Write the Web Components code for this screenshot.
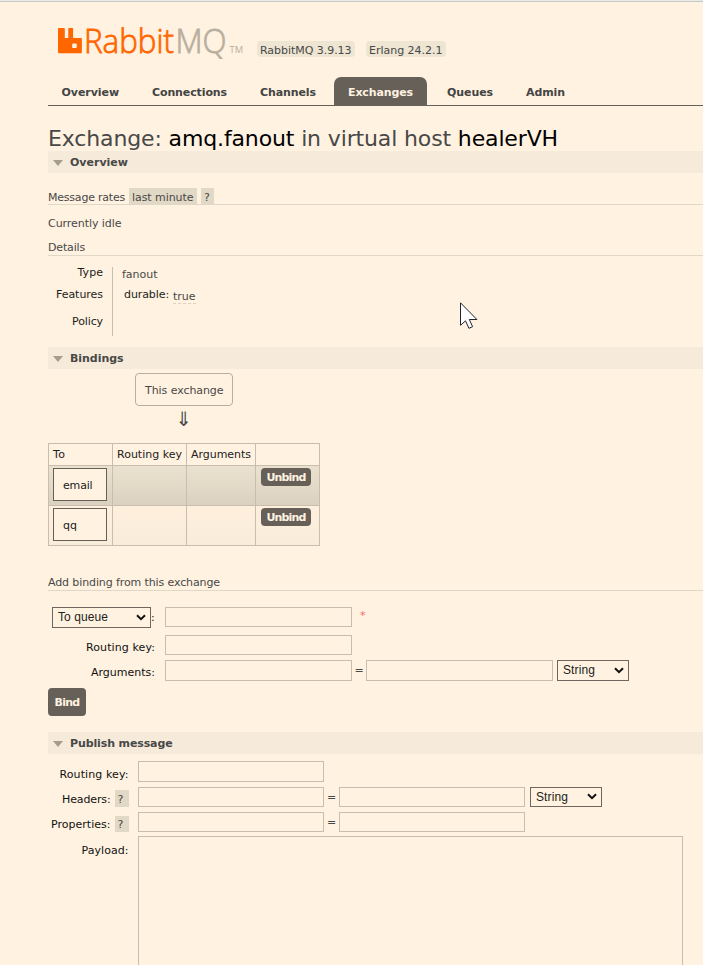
<!DOCTYPE html>
<html lang="en">
<head>
<meta charset="utf-8">
<title>RabbitMQ Management</title>
<style>
html,body{margin:0;padding:0}
body{width:703px;height:965px;overflow:hidden;background:#fff2e0;color:#484848;font:11px/13px "DejaVu Sans",Verdana,sans-serif}
</style>
</head>
<body>
<management-page></management-page>
<script>
function element(name, markup) {
  customElements.define(name, class extends HTMLElement {
    constructor() {
      super();
      const t = document.createElement('template');
      t.innerHTML = markup;
      this.attachShadow({mode: 'open'}).appendChild(t.content.cloneNode(true));
    }
    connectedCallback() {
      for (const p of ['w', 'h']) if (this.hasAttribute(p)) this.style.setProperty('--' + p, this.getAttribute(p) + 'px');
    }
  });
}

element('brand-logo', `<style>:host{display:block;width:190px;height:50px;margin-top:-13px}svg{display:block}text{font-family:"Open Sans","Noto Sans",sans-serif}</style>
<svg width="190" height="54" viewBox="0 -13 190 54">
<path fill="#f60" d="M1 3h5q.8 0 .8.8v9.200h3.500V3.800q0-.8.8-.8h3.200q.8 0 .8.8v9.200h7.800q1 0 1 1v13.200q0 1-1 1H1q-1 0-1-1V3.800Q0 3 1 3zM15 18.500q-.8 0-.8.8v3q0 .8.8.8h3q.8 0 .8-.8v-3q0-.8-.8-.8z" fill-rule="evenodd"/>
<text x="26" y="28" font-size="33.500" font-weight="300" fill="#f60" stroke="#f60" stroke-width=".8" textLength="90" lengthAdjust="spacingAndGlyphs">Rabbit</text>
<text x="117.500" y="28" font-size="33.500" font-weight="300" fill="#b9af9e" stroke="#b9af9e" stroke-width=".8" textLength="51" lengthAdjust="spacingAndGlyphs">MQ</text>
<text x="171.500" y="28" font-size="9.500" fill="#b9af9e" textLength="13.500" lengthAdjust="spacingAndGlyphs">TM</text>
</svg>`);

element('version-badge', `<style>:host{display:block;box-sizing:border-box;width:var(--w);height:16px;padding:3px 0 0 3px;border-radius:4px;background:#eee5d2}</style><slot></slot>`);

element('nav-tab', `<style>:host{display:block;box-sizing:border-box;height:28px;padding:9px 14px 0;font-weight:bold;color:#444;border-radius:7px 7px 0 0}:host([selected]){background:#666059;color:#fff2e0}</style><slot></slot>`);

element('section-bar', `<style>:host{display:flex;align-items:center;height:22px;padding-left:5px;gap:7px;background:#f6ebda;font-weight:bold;color:#484848}svg{display:block;margin-top:2px}</style>
<svg width="10" height="6"><path d="M0 0h10L5 6z" fill="#a59d8f"/></svg><slot></slot>`);

element('sub-head', `<style>:host{display:flex;align-items:flex-end;box-sizing:border-box;height:17px;gap:4px;border-bottom:1px solid #e0d7c6}span{height:var(--lift,13px)}</style><span><slot></slot></span><slot name="extra"></slot>`);

element('grey-tag', `<style>:host{display:block;box-sizing:border-box;height:var(--h);width:var(--w);padding:3px 0 0 3px;background:#e2d8c6;color:#484848}</style><slot></slot>`);

element('text-field', `<style>:host{display:block;flex:none;box-sizing:border-box;width:var(--w,187px);height:var(--h,20px);border:1px solid #c9bdae}</style>`);

element('drop-down', `<style>:host{display:flex;flex:none;box-sizing:border-box;width:var(--w);height:var(--h,21px);border:1px solid #6f665e;align-items:center;justify-content:space-between;padding:0 4px 0 5px;color:#222;font:12px/15px "Liberation Sans",Arial,sans-serif}svg{display:block}</style>
<slot></slot><svg width="10" height="8" viewBox="0 0 10 8"><path d="M1 1.200l4 4 4-4" fill="none" stroke="#111" stroke-width="2"/></svg>`);

element('dark-button', `<style>:host{display:block;box-sizing:border-box;width:var(--w);height:var(--h);line-height:var(--h);text-align:center;border-radius:4px;background:#666059;color:#fff2e0;font-weight:bold}div{padding-top:1px;box-sizing:border-box}</style><div><slot></slot></div>`);

element('form-row', `<style>:host{display:flex;align-items:flex-start;height:var(--row)}
.l{display:flex;align-items:flex-start;justify-content:flex-end;gap:5px;flex:none;box-sizing:border-box;width:var(--label);margin-right:var(--gap);color:#111}</style><div class="l"><slot name="label"></slot></div><slot></slot>`);

element('details-list', `<style>:host{display:flex;height:69px;margin-top:11px}
.k{width:55px;text-align:right;padding-right:9px;color:#1c1c1c;border-right:1px solid #c9bdae}
.k>div:first-child{margin-top:-1px}
.v{padding-left:9px}.k div,.v div{height:13px}.f{margin-top:9px}.p{margin-top:14px}
.r{display:flex;margin-top:7px;padding-left:2px;gap:4px;color:#1c1c1c}u{display:block;height:13px;margin-top:2px;text-decoration:none;color:#484848;border-bottom:1px dashed #ddd2c0}</style>
<div class="k"><div><fit-text w="25.500">Type</fit-text></div><div class="f"><fit-text w="47">Features</fit-text></div><div class="p"><fit-text w="31">Policy</fit-text></div></div>
<div class="v"><div style="margin-top:1px"><fit-text w="35.500">fanout</fit-text></div><div class="r"><fit-text w="45">durable:</fit-text><u><fit-text w="22.500">true</fit-text></u></div></div>`);

element('binding-graph', `<style>:host{display:flex;flex-direction:column;align-items:center;width:272px;padding-top:4px;height:70px}
.b{box-sizing:border-box;width:98px;height:33px;border:1px solid #b9af9e;border-radius:4px;padding:10px 0 0 9px}
.a{font-size:20px;line-height:24px;margin-top:1px;color:#484848}</style>
<div class="b"><fit-text w="78.500">This exchange</fit-text></div><div class="a">⇓</div>`);

element('binding-table', `<style>:host{display:grid;grid-template-columns:64px 74px 69px 64px;grid-template-rows:22px 40px 40px;width:271px;border:solid #c9bdae;border-width:1px 0 0 1px;color:#222}
div{box-sizing:border-box;border:solid #c9bdae;border-width:0 1px 1px 0;padding:4px 0 0 4px}
.o,.e{padding:2px 0 0 4px}.o{background:linear-gradient(#eae2cf,#dbd1c0)}.e{background:linear-gradient(#fff0dd,#f8ecda)}
b{display:block;box-sizing:border-box;width:54px;height:33px;border:1px solid #666059;background:#fff2e0;font-weight:normal;padding:10px 0 0 9px}
dark-button{margin-left:1px}</style>
<div><fit-text w="12.500">To</fit-text></div><div><fit-text w="65">Routing key</fit-text></div><div><fit-text w="60">Arguments</fit-text></div><div></div>
<div class="o"><b><fit-text w="29.500">email</fit-text></b></div><div class="o"></div><div class="o"></div><div class="o"><dark-button w="50" h="18"><fit-text w="39">Unbind</fit-text></dark-button></div>
<div class="e"><b><fit-text w="14">qq</fit-text></b></div><div class="e"></div><div class="e"></div><div class="e"><dark-button w="50" h="18"><fit-text w="39">Unbind</fit-text></dark-button></div>`);

element('mouse-pointer', `<style>:host{display:block;position:absolute;left:460px;top:302px}svg{display:block}</style>
<svg width="19" height="28" viewBox="0 0 19 28"><path d="M.5.8v22.500l5-4.500 3.400 7.500 3.700-1.600-3.300-7.200h7.600z" fill="#fff" stroke="#222232"/></svg>`);

element('management-page', `<style>
:host{display:block;position:relative;height:965px;overflow:hidden}
.top{height:1px;background:#ebe9e4;border-bottom:1px solid #c6c9c9}
main{margin-left:48px}
header{display:flex;height:75px;box-sizing:border-box;padding:23px 0 0 10px}
header version-badge{margin-top:16px}
nav{display:flex;height:28px;border-bottom:1px solid #666059}
h1{margin:0;height:45px;box-sizing:border-box;padding-top:19px;font-size:22px;line-height:28px;font-weight:normal;color:#484848}
h1 b{font-weight:normal;color:#000}
.idle{margin-top:12px;height:13px}
.eq{width:14px;text-align:center;flex:none;padding-top:4px}
.bind{--label:107px;--gap:10px;padding-top:16px;height:81px}
.pub{--label:80.500px;--gap:9.500px;padding-top:7px}
.pub text-field{--w:186px}
.star{color:#f66;padding:2px 0 0 8px}
</style>
<div class="top"></div>
<main>
<header><brand-logo></brand-logo><version-badge w="98" style="margin-left:9px"><fit-text w="91.500">RabbitMQ 3.9.13</fit-text></version-badge><version-badge w="80" style="margin-left:11px"><fit-text w="73.500">Erlang 24.2.1</fit-text></version-badge></header>
<nav><nav-tab style="margin-left:-.5px"><fit-text w="57.500">Overview</fit-text></nav-tab><nav-tab style="margin-left:5px"><fit-text w="75">Connections</fit-text></nav-tab><nav-tab style="margin-left:5px"><fit-text w="56">Channels</fit-text></nav-tab><nav-tab selected style="margin-left:4px"><fit-text w="65">Exchanges</fit-text></nav-tab><nav-tab style="margin-left:6px"><fit-text w="46">Queues</fit-text></nav-tab><nav-tab style="margin-left:5px"><fit-text w="39">Admin</fit-text></nav-tab></nav>
<h1><fit-text w="510">Exchange: <b>amq.fanout</b> in virtual host <b>healerVH</b></fit-text></h1>
<section-bar><fit-text w="58">Overview</fit-text></section-bar>
<sub-head style="margin-top:15px"><fit-text w="77">Message rates</fit-text><grey-tag slot="extra" w="68" h="16"><fit-text w="61.500">last minute</fit-text></grey-tag><grey-tag slot="extra" w="13" h="16"><fit-text w="6">?</fit-text></grey-tag></sub-head>
<div class="idle"><fit-text w="73.500">Currently idle</fit-text></div>
<sub-head style="margin-top:9px;--lift:14px"><fit-text w="37">Details</fit-text></sub-head>
<details-list></details-list>
<section-bar style="margin-top:11px"><fit-text w="53.500">Bindings</fit-text></section-bar>
<binding-graph></binding-graph>
<binding-table></binding-table>
<sub-head style="margin-top:28px;--lift:14px"><fit-text w="172">Add binding from this exchange</fit-text></sub-head>
<div class="bind">
<form-row style="--row:28px"><drop-down slot="label" w="99"><fit-text w="50">To queue</fit-text></drop-down><span slot="label" style="padding-top:4px;margin-left:-5px"><fit-text w="4">:</fit-text></span><text-field></text-field><span class="star"><fit-text w="7">*</fit-text></span></form-row>
<form-row style="--row:25px"><span slot="label" style="padding-top:6px"><fit-text w="69">Routing key:</fit-text></span><text-field></text-field></form-row>
<form-row style="--row:28px"><span slot="label" style="padding-top:6px"><fit-text w="64">Arguments:</fit-text></span><text-field h="21"></text-field><span class="eq">=</span><text-field h="21"></text-field><drop-down w="72" style="margin-left:4px"><fit-text w="32">String</fit-text></drop-down></form-row>
</div>
<dark-button w="38" h="28"><fit-text w="25">Bind</fit-text></dark-button>
<section-bar style="margin-top:16px"><fit-text w="102.500">Publish message</fit-text></section-bar>
<div class="pub">
<form-row style="--row:26px"><span slot="label" style="padding-top:7px"><fit-text w="69">Routing key:</fit-text></span><text-field h="21"></text-field></form-row>
<form-row style="--row:25px"><span slot="label" style="padding-top:6px"><fit-text w="48.500">Headers:</fit-text></span><grey-tag slot="label" w="14" h="17" style="margin:3px 0 0 -1px"><fit-text w="6">?</fit-text></grey-tag><text-field></text-field><span class="eq" style="width:15px">=</span><text-field></text-field><drop-down w="72" h="20" style="margin-left:5px"><fit-text w="32">String</fit-text></drop-down></form-row>
<form-row style="--row:24px"><span slot="label" style="padding-top:6px"><fit-text w="59.500">Properties:</fit-text></span><grey-tag slot="label" w="14" h="16" style="margin:4px 0 0 -1px;padding-top:2px"><fit-text w="6">?</fit-text></grey-tag><text-field></text-field><span class="eq" style="width:15px">=</span><text-field></text-field></form-row>
<form-row style="--row:129px"><span slot="label" style="padding-top:8px"><fit-text w="47">Payload:</fit-text></span><text-field h="140" style="width:545px"></text-field></form-row>
</div>
</main>
<mouse-pointer></mouse-pointer>`);

// Spreads its content over the advance width given in the "w" attribute.
customElements.define('fit-text', class extends HTMLElement {
  constructor() {
    super();
    this.attachShadow({mode: 'open'}).innerHTML = '<style>:host{display:inline-block;white-space:nowrap;vertical-align:top;text-align:left}span{display:inline-block;vertical-align:top}</style><span><slot></slot></span>';
  }
  connectedCallback() {
    const w = +this.getAttribute('w'), s = this.shadowRoot.querySelector('span');
    const n = this.textContent.length;
    s.style.letterSpacing = (w - s.getBoundingClientRect().width) / n + 'px';
    this.style.width = w + 'px';
  }
});
</script>
</body>
</html>
